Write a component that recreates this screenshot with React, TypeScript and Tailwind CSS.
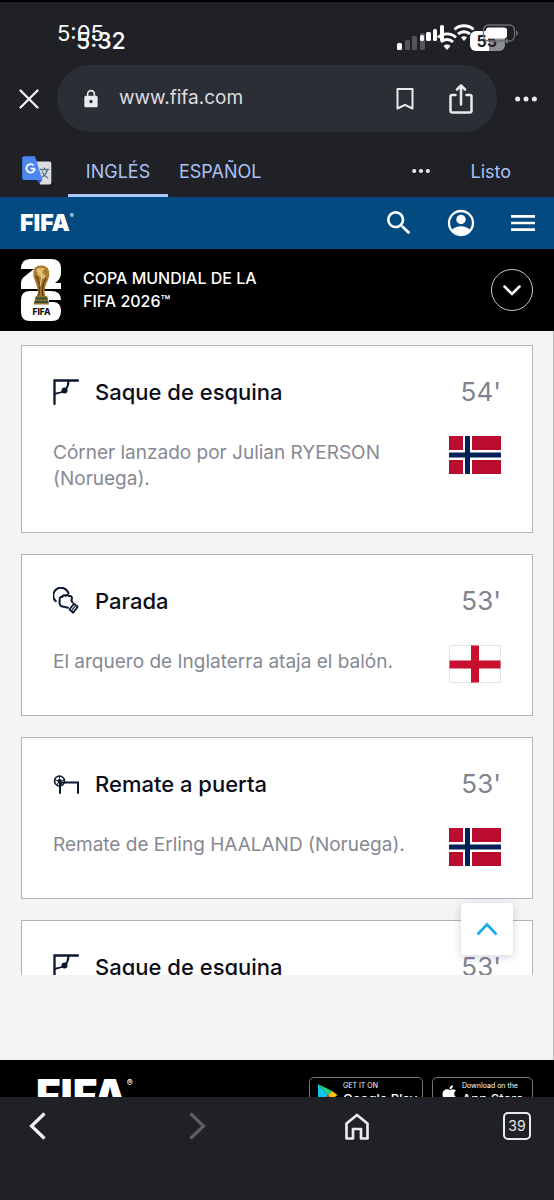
import React from "react";
import { MdLock, MdSearch, MdMenu } from "react-icons/md";
import { FaApple } from "react-icons/fa";

function SignalBars() {
  return (
    <svg width="150" height="30" viewBox="0 0 150 30" aria-hidden="true">
      <g fill="#54555a">
        <rect x="11" y="16" width="5" height="10" rx="1.5" />
        <rect x="18" y="12" width="5" height="14" rx="1.5" />
        <rect x="26" y="9" width="5" height="17" rx="1.5" />
      </g>
      <g fill="#fff">
        <rect x="3" y="19" width="5" height="7" rx="1.5" />
        <rect x="26" y="11" width="4" height="6" rx="1.5" />
        <rect x="32" y="8" width="5" height="9" rx="1.5" />
        <rect x="39" y="5" width="4" height="12" rx="1.5" />
        <rect x="46" y="1" width="4" height="16" rx="1.5" />
      </g>
      <g fill="none" stroke="#fff" strokeWidth="2.900">
        <path d="M44 13.5a13 13 0 0 1 18 0" />
        <path d="M47 18a8.500 8.500 0 0 1 12 0" />
        <path d="M60.500 5.500a14 14 0 0 1 19 0" />
        <path d="M64 10a9 9 0 0 1 12 0" />
      </g>
      <path d="M49.500 22a5 5 0 0 1 7 0L53 26z" fill="#fff" />
      <path d="M67 13.500a4.500 4.500 0 0 1 6 0L70 17z" fill="#fff" />
      <path d="M82 7h13v20H82a6 6 0 0 1-6-6v-8a6 6 0 0 1 6-6z" fill="#fff" />
      <path d="M95 7h10a6 6 0 0 1 6 6v8a6 6 0 0 1-6 6H95z" fill="#8e8e91" />
      <path d="M112 14.500v5q2-.5 2-2.500t-2-2.500z" fill="#8e8e91" />
      <text x="82.500" y="23" fontFamily="Inter, sans-serif" fontSize="16" fontWeight="700" fill="#202126">
        55
      </text>
      <rect x="89.500" y="1" width="31" height="16" rx="5" fill="none" stroke="#6b6c70" strokeWidth="1.300" />
      <rect x="92" y="3.500" width="21" height="11" rx="3" fill="#fff" />
      <path d="M122 6.500v5q2-.5 2-2.500t-2-2.500z" fill="#6b6c70" />
    </svg>
  );
}

function Dots({ small }: { small?: boolean }) {
  return (
    <svg width={small ? 18 : 22} height="6" viewBox={small ? "0 0 18 6" : "0 0 22 6"} fill="#e8eaed" aria-hidden="true">
      {small ? (
        <>
          <circle cx="2.200" cy="3" r="2.100" />
          <circle cx="9" cy="3" r="2.100" />
          <circle cx="15.800" cy="3" r="2.100" />
        </>
      ) : (
        <>
          <circle cx="2.600" cy="3" r="2.500" />
          <circle cx="11" cy="3" r="2.500" />
          <circle cx="19.400" cy="3" r="2.500" />
        </>
      )}
    </svg>
  );
}

function TranslateIcon() {
  return (
    <svg width="30" height="30" viewBox="0 0 30 30" aria-hidden="true">
      <path d="M11 5.500h16.500A1.800 1.800 0 0 1 29.300 7.300v19.500A1.800 1.800 0 0 1 27.500 28.600H18z" fill="#dcdddf" />
      <path d="M14.500 23.500h6l-3.500 4.500z" fill="#3a4fc0" />
      <path d="M2 .3h11L20.500 24H2A1.800 1.800 0 0 1 .2 22.200V2A1.800 1.800 0 0 1 2 .3z" fill="#4c86ee" />
      <path d="M12.800 12.700H8.700M12.800 12.700a4.200 4.200 0 1 1-1.200-3.300" fill="none" stroke="#fff" strokeWidth="1.800" />
      <path d="M18 13.500h9M22.500 11.500v2M25.500 13.500c-.8 3.500-3 6-6 8M20 15.500c1.200 3 3.300 5 6 6.500" fill="none" stroke="#5d7488" strokeWidth="1.300" />
    </svg>
  );
}

function Emblem() {
  return (
    <svg width="43" height="64" viewBox="0 0 43 64" role="img" aria-label="FIFA 2026">
      <path d="M10 1h21q10 0 10 9v5q0 6-6 10h6v6H1v-6q0-4 4-7l9-7H1q0-10 9-10z" fill="#fff" />
      <path d="M10 33h21q10 0 10 9H29v2h4q8 0 8 9 0 10-9 10H10q-9 0-9-9V42q0-9 9-9z" fill="#fff" />
      <path d="M13.500 13q1-5.500 7.500-5.500t8 5.500q1 5-1 9-3.500 6-3.500 13l2 7H16l2-7q0-6-3-12-2.500-5-1.500-10z" fill="#a87932" />
      <path d="M16 12q5-4 9-1l-3 3 4 4-3 3-5-4z" fill="#dfb869" />
      <path d="M16 18q5 7 3 18l-2 4M26 20q-5 8-3 19" fill="none" stroke="#5f3d16" strokeWidth="1.400" />
      <path d="M18 10l4 8-2 10" fill="none" stroke="#edcf85" strokeWidth="1" />
      <path d="M16 38h11l2 8.500H13.500z" fill="#96702f" />
      <path d="M15.500 40.500h12M14.500 44h14" stroke="#315333" strokeWidth="2" />
      <text x="21.500" y="57" textAnchor="middle" fontFamily="Inter, sans-serif" fontWeight="800" fontSize="8.500" fill="#111">
        FIFA
      </text>
    </svg>
  );
}

function CornerIcon() {
  return (
    <svg width="26" height="28" viewBox="0 0 26 28" fill="none" stroke="#0b1730" strokeWidth="2.300" strokeLinecap="round" aria-hidden="true">
      <path d="M1.500 26V2.500H25" />
      <path d="M15.500 3Q15.500 8 12 12.500 8 15 2 15.700" strokeWidth="2" />
      <circle cx="11.500" cy="12.500" r="3" fill="#0b1730" stroke="none" />
    </svg>
  );
}

function SaveIcon() {
  return (
    <svg width="26" height="28" viewBox="0 0 26 28" fill="none" stroke="#0b1730" strokeWidth="2" strokeLinejoin="round" strokeLinecap="round" aria-hidden="true">
      <path d="M2.800 14.300A7.800 7.800 0 1 1 15.500 6.200" />
      <path d="M15 20.800l-6.500-1.500c-1.200-.3-1.700-1.500-2-3-.4-1.500.6-2.300.2-3.600-.4-1.800 1-3.400 2.700-2.800.2-1.600 2.300-2.400 3.400-1 1-1.200 2.600-1 3.200.3 1.700-.7 3.400.5 2.900 2.400l-.5 2 1.200 1.800" />
      <path d="M16.500 22.500l4.500-5.700 3.700 2.800-4.500 6.200z" strokeWidth="1.800" />
      <path d="M19 23.200l3.200-4.200" strokeWidth="1.200" />
    </svg>
  );
}

function ShotIcon() {
  return (
    <svg width="26" height="28" viewBox="0 0 26 28" fill="none" stroke="#0b1730" strokeWidth="2" aria-hidden="true">
      <path d="M7 23V12.500h18V23" strokeLinecap="round" />
      <circle cx="6.500" cy="11" r="5" strokeWidth="1.600" />
      <path d="M6.500 8.400l2.400 1.900-1 3H5.100l-1-3z" fill="#0b1730" stroke="none" />
      <path d="M6.500 6v2.500M2 10l2 .5M11 10l-2 .5M4 15l1-2M9 15l-1-2" strokeWidth="1" />
    </svg>
  );
}

function Norway() {
  return (
    <svg width="52" height="38" viewBox="0 0 52 38" role="img" aria-label="Noruega">
      <path fill="#ba0c2f" d="M0 0h52v38H0z" />
      <path fill="#fff" d="M14 0h9v38h-9zM0 14h52v10H0z" />
      <path fill="#00205b" d="M16 0h5v38h-5zM0 16.500h52v5H0z" />
    </svg>
  );
}

function England() {
  return (
    <svg width="52" height="38" viewBox="0 0 52 38" role="img" aria-label="Inglaterra">
      <path fill="#fff" stroke="#e3e4e8" d="M.5.500h51v37H.5z" />
      <path fill="#c8102e" d="M22 .500h8v37h-8zM.5 15.500h51v8H.5z" />
    </svg>
  );
}

type Play = { title: string; minute: string; text: string; icon: React.ReactNode; flag: React.ReactNode };

const plays: Play[] = [
  { title: "Saque de esquina", minute: "54'", text: "Córner lanzado por Julian RYERSON (Noruega).", icon: <CornerIcon />, flag: <Norway /> },
  { title: "Parada", minute: "53'", text: "El arquero de Inglaterra ataja el balón.", icon: <SaveIcon />, flag: <England /> },
  { title: "Remate a puerta", minute: "53'", text: "Remate de Erling HAALAND (Noruega).", icon: <ShotIcon />, flag: <Norway /> },
  { title: "Saque de esquina", minute: "53'", text: "", icon: <CornerIcon />, flag: <Norway /> },
];

function PlayCard({ play }: { play: Play }) {
  return (
    <article className="shrink-0 border border-[#b1b2bf] bg-white px-[31px] pt-[30px] pb-10">
      <div className="flex h-8 items-center">
        {play.icon}
        <h2 className="ml-4 flex-1 text-[22px] leading-8 font-medium text-[#0b0d18]">{play.title}</h2>
        <span className="text-[26px] leading-8 text-[#80838d]">{play.minute}</span>
      </div>
      <div className="mt-7 flex items-start justify-between">
        <p className="mt-1 flex-1 pr-10 text-[19px] leading-[26px] text-[#868993]">{play.text}</p>
        <div className="h-[30px]">{play.flag}</div>
      </div>
    </article>
  );
}

export default function App() {
  return (
    <div className="flex h-screen flex-col overflow-hidden bg-[#202126] font-['Inter',sans-serif] text-white">
      <div className="relative h-[65px] shrink-0 border-t-2 border-black">
        <span className="absolute top-[17px] left-[57px] text-[22px] leading-7">5:05</span>
        <span className="absolute top-[23px] left-[76px] text-[23px] leading-8 font-medium">5:32</span>
        <div className="absolute top-[22px] right-[10px]">
          <SignalBars />
        </div>
      </div>

      <div className="flex h-[67px] shrink-0 items-center">
        <button aria-label="Cerrar" className="flex w-[57px] justify-center">
          <svg width="20" height="20" viewBox="0 0 20 20" stroke="#f1f1f3" strokeWidth="2.300" strokeLinecap="round" aria-hidden="true">
            <path d="M1.500 1.500l17 17M18.500 1.500l-17 17" />
          </svg>
        </button>
        <div className="flex h-full flex-1 items-center rounded-full bg-[#2c2e36] pr-6 pl-6">
          <MdLock size={20} className="text-[#e8eaed]" />
          <input
            aria-label="Dirección"
            defaultValue="www.fifa.com"
            className="ml-[18px] w-0 flex-1 bg-transparent text-[19px] text-[#dcdde1] outline-none"
          />
          <button aria-label="Guardar">
            <svg width="18" height="22" viewBox="0 0 18 22" fill="none" stroke="#e8eaed" strokeWidth="2" strokeLinejoin="round" aria-hidden="true">
              <path d="M1.500 1h15v19.500L9 16.800 1.500 20.500z" />
            </svg>
          </button>
          <button aria-label="Compartir" className="ml-[35px]">
            <svg width="24" height="32" viewBox="0 0 24 32" fill="none" stroke="#e8eaed" strokeWidth="2.500" strokeLinecap="round" strokeLinejoin="round" aria-hidden="true">
              <path d="M6.500 12H3a1.500 1.500 0 0 0-1.500 1.500v14.500a1.500 1.500 0 0 0 1.500 1.500h18a1.500 1.500 0 0 0 1.500-1.500V13.500a1.500 1.500 0 0 0-1.500-1.500H17.500M12 21.500V3M8 6.500L12 2.500 16 6.500" />
            </svg>
          </button>
        </div>
        <button aria-label="Más" className="flex w-[57px] justify-center">
          <Dots />
        </button>
      </div>

      <div className="flex h-[65px] shrink-0 items-stretch pt-[13px] pl-[22px] text-[18px] text-[#a9c1f5]">
        <div className="flex items-center">
          <TranslateIcon />
        </div>
        <button className="ml-4 w-[100px] border-b-[3px] border-[#a8c7fa] pt-[3px]">INGLÉS</button>
        <button className="ml-[11px]">ESPAÑOL</button>
        <button aria-label="Opciones" className="ml-auto flex items-center">
          <Dots small />
        </button>
        <button className="mr-[43px] ml-10">Listo</button>
      </div>

      <header className="flex h-[52px] shrink-0 items-center bg-[#034a80] pr-[15px] pl-5">
        <a href="#" className="flex items-start text-[23px] leading-6 font-black">
          FIFA<span className="text-[6px] leading-[10px]">®</span>
        </a>
        <button aria-label="Buscar" className="ml-auto">
          <MdSearch size={32} />
        </button>
        <button aria-label="Cuenta" className="ml-8">
          <svg width="28" height="28" viewBox="0 0 28 28" aria-hidden="true">
            <circle cx="14" cy="14" r="12" fill="none" stroke="#fff" strokeWidth="2.300" />
            <circle cx="14" cy="10.500" r="4.700" fill="#fff" />
            <path d="M5 21q3.500-3.700 9-3.700t9 3.700q-3.500 5-9 5t-9-5z" fill="#fff" />
          </svg>
        </button>
        <button aria-label="Menú" className="ml-8">
          <MdMenu size={32} />
        </button>
      </header>

      <div className="flex h-[82px] shrink-0 items-center bg-black pr-[21px] pl-5">
        <Emblem />
        <h1 className="ml-5 w-[190px] text-[16px] leading-[23px] font-medium">
          COPA MUNDIAL DE LA FIFA 2026™
        </h1>
        <button aria-label="Desplegar" className="ml-auto flex h-[42px] w-[42px] items-center justify-center rounded-full border border-[#c9c9c9]">
          <svg width="18" height="11" viewBox="0 0 18 11" fill="none" stroke="#fff" strokeWidth="2.500" strokeLinecap="round" aria-hidden="true">
            <path d="M1.500 1.500L9 9l7.500-7.500" />
          </svg>
        </button>
      </div>

      <main className="relative flex min-h-0 flex-1 flex-col border-r border-[#b9babd] bg-[#f4f4f5] pt-[14px] pr-5 pb-[85px] pl-[21px]">
        <div className="flex min-h-0 flex-1 flex-col gap-[21px] overflow-hidden">
          {plays.map((play, i) => (
            <PlayCard key={i} play={play} />
          ))}
        </div>
        <button aria-label="Volver arriba" className="absolute right-[40px] bottom-[105px] flex h-[52px] w-[52px] items-center justify-center rounded-[4px] bg-white shadow-[0_2px_8px_rgba(40,40,80,0.2)]">
          <svg width="22" height="14" viewBox="0 0 22 14" fill="none" stroke="#17a9f5" strokeWidth="2.600" aria-hidden="true">
            <path d="M1.500 12.500L11 2.500l9.500 10" />
          </svg>
        </button>
      </main>

      <footer className="flex h-[37px] shrink-0 items-start overflow-hidden bg-black pt-[17px] pr-[21px] pl-9">
        <a href="#" className="-mt-2 flex shrink-0 items-start text-[42px] leading-[52px] font-black">
          FIFA<span className="mt-2 text-[9px] leading-3 font-medium">®</span>
        </a>
        <a href="#" className="ml-auto flex h-[38px] w-[114px] shrink-0 rounded-[5px] border border-[#77777a] pl-[7px]">
          <svg width="21" height="24" viewBox="0 0 21 24" className="mt-[5px] shrink-0" aria-hidden="true">
            <path d="M1 1v22L11 12z" fill="#12c4f0" />
            <path d="M1 1l14 7-4 4z" fill="#22d37d" />
            <path d="M15 8l5.500 4L15 16l-4-4z" fill="#fcc414" />
            <path d="M1 23l14-7-4-4z" fill="#ee4158" />
          </svg>
          <span className="ml-[5px] flex flex-col pt-[3px] whitespace-nowrap">
            <span className="text-[7px] leading-[10px]">GET IT ON</span>
            <span className="text-[13px] leading-4 font-medium">Google Play</span>
          </span>
        </a>
        <a href="#" className="ml-[9px] flex h-[38px] w-[101px] shrink-0 rounded-[5px] border border-[#77777a] pl-[7px]">
          <FaApple size={19} className="mt-[6px] shrink-0" />
          <span className="ml-[3px] flex flex-col pt-[3px] whitespace-nowrap">
            <span className="text-[7px] leading-[10px]">Download on the</span>
            <span className="text-[13px] leading-4 font-medium">App Store</span>
          </span>
        </a>
      </footer>

      <nav className="flex h-[103px] shrink-0 items-start justify-between bg-[#202126] px-[23px] pt-[15px]">
        <button aria-label="Atrás" className="flex h-7 w-7 items-center justify-center">
          <svg width="17" height="28" viewBox="0 0 17 28" fill="none" stroke="#f0f1f3" strokeWidth="3.200" aria-hidden="true">
            <path d="M15.500 1.500L2.500 14l13 12.500" />
          </svg>
        </button>
        <button aria-label="Adelante" className="flex h-7 w-7 items-center justify-center">
          <svg width="17" height="28" viewBox="0 0 17 28" fill="none" stroke="#5d5e63" strokeWidth="3.200" aria-hidden="true">
            <path d="M1.500 1.500l13 12.500-13 12.500" />
          </svg>
        </button>
        <button aria-label="Inicio" className="flex h-7 w-7 items-center justify-center">
          <svg width="24" height="27" viewBox="0 0 24 27" fill="none" stroke="#e8eaed" strokeWidth="2.700" strokeLinejoin="round" aria-hidden="true">
            <path d="M1.500 10.500L12 2l10.500 8.500v15h-6.500v-9.500h-8v9.500h-6.500z" />
          </svg>
        </button>
        <button aria-label="Pestañas" className="flex h-7 w-7 items-center justify-center rounded-[5px] border-2 border-[#e8eaed] text-[14px] leading-4 text-[#e8eaed]">
          39
        </button>
      </nav>
    </div>
  );
}
